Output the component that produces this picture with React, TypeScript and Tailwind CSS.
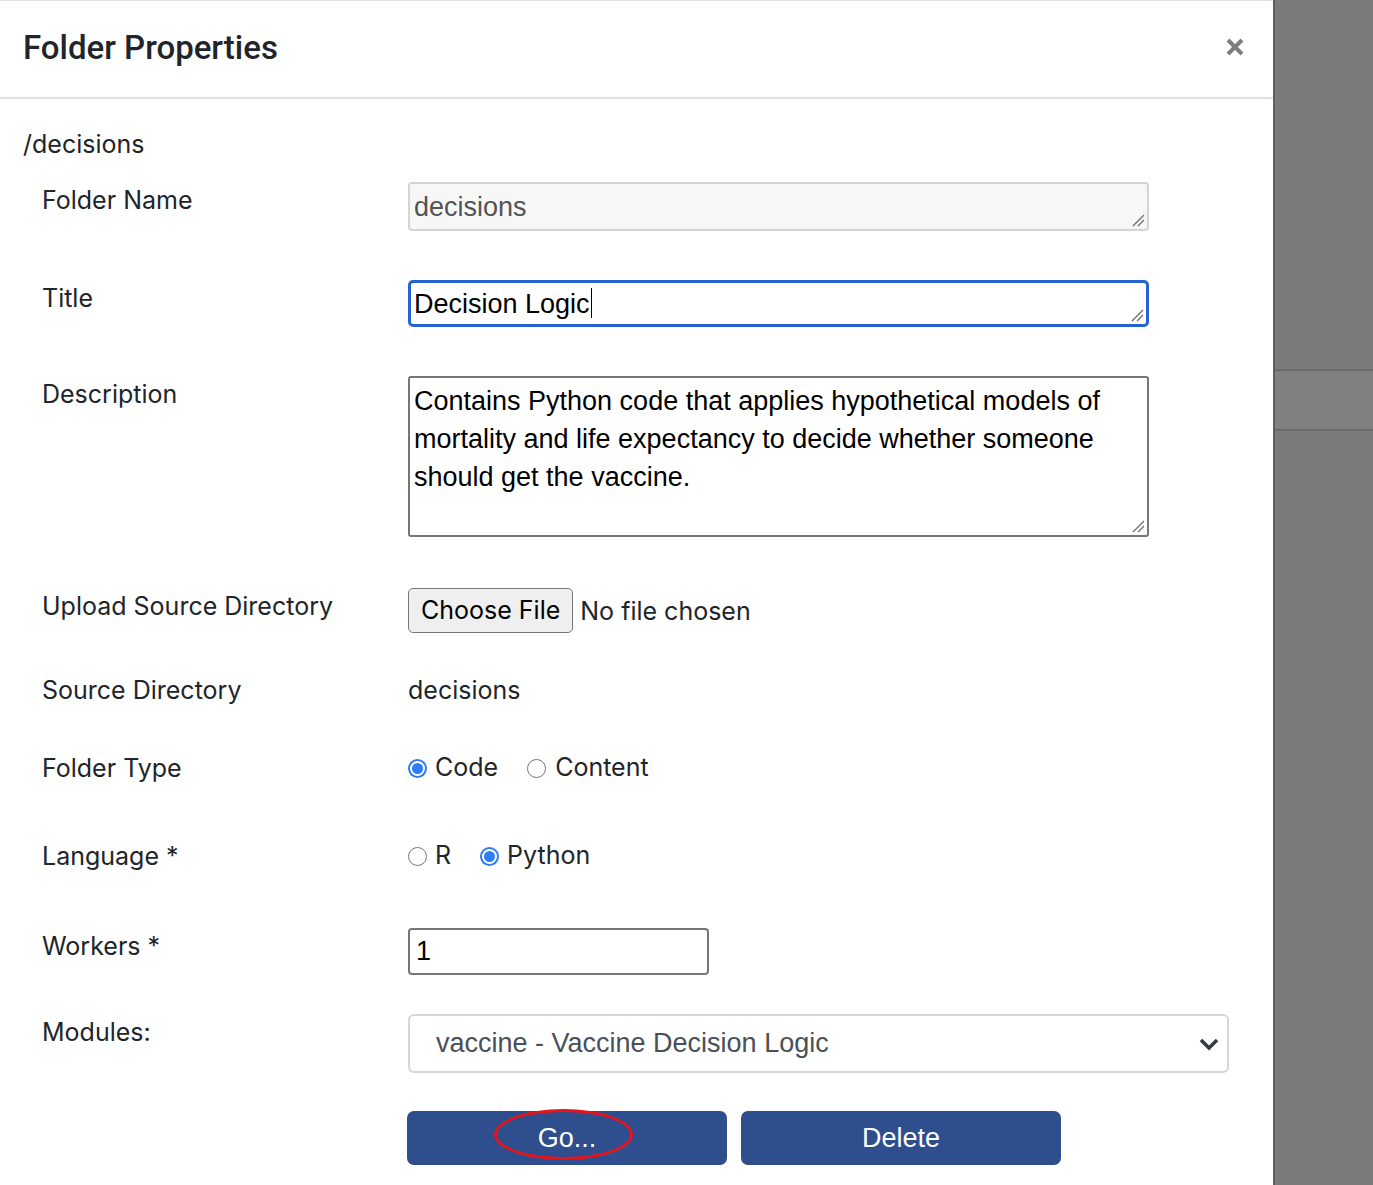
import React from "react";

const sf = "font-['Inter','Noto_Sans',sans-serif]";
const hv = "font-['Liberation_Sans','Arial',sans-serif]";

function Grip() {
  return (
    <svg
      className="absolute right-[2px] bottom-[2px]"
      width="14"
      height="14"
      viewBox="0 0 14 14"
    >
      <path d="M13 2L2 13M13 7L7 13" stroke="#6b6b6b" strokeWidth="1.3" />
    </svg>
  );
}

function Radio({ checked }: { checked?: boolean }) {
  return checked ? (
    <span className="inline-flex w-[19px] h-[19px] rounded-full bg-[#2f7cf6] items-center justify-center shrink-0">
      <span className="w-[15px] h-[15px] rounded-full bg-white flex items-center justify-center">
        <span className="w-[11px] h-[11px] rounded-full bg-[#2f7cf6]" />
      </span>
    </span>
  ) : (
    <span className="inline-block w-[19px] h-[19px] rounded-full border-[1.5px] border-[#767676] bg-white shrink-0" />
  );
}

function Row({
  label,
  h,
  children,
}: {
  label: string;
  h: string;
  children?: React.ReactNode;
}) {
  return (
    <div className={`flex items-start ${h}`}>
      <div className={`w-[385px] pl-[19px] text-[25px] leading-[36px] text-[#212529] ${sf}`}>
        {label}
      </div>
      <div className="flex-1">{children}</div>
    </div>
  );
}

export default function App() {
  return (
    <div className="flex w-[1373px] h-[1185px] overflow-hidden bg-white">
      <div className="w-[1273px] shrink-0 border-t border-[#dee2e6]">
        <div className="h-[98px] flex items-center justify-between pl-[23px] pr-[28px] border-b-2 border-[#dee2e6]">
          <h1 className={`text-[33px] font-medium text-[#212529] mt-[-2px] font-['Roboto','Liberation_Sans',sans-serif]`}>
            Folder Properties
          </h1>
          <svg width="20" height="20" viewBox="0 0 20 20" className="mt-[-4px]">
            <path d="M3 3L17 17M17 3L3 17" stroke="#7d7d7d" strokeWidth="4" />
          </svg>
        </div>

        <div className="pl-[23px] pt-[27px]">
          <div className={`text-[25px] leading-[36px] text-[#212529] mb-[20px] ${sf}`}>
            /decisions
          </div>

          <Row label="Folder Name" h="h-[98px]">
            <div className={`relative w-[741px] h-[49px] rounded-[4px] border-2 border-[#d4d4d4] bg-[#f7f7f7] pl-[4px] pt-[5px] text-[27px] leading-[36px] text-[#545454] ${hv}`}>
              decisions
              <Grip />
            </div>
          </Row>

          <Row label="Title" h="h-[96px]">
            <div className={`relative w-[741px] h-[47px] rounded-[5px] border-[3px] border-[#2563d3] pl-[3px] pt-[3px] text-[27px] leading-[36px] text-black ${hv}`}>
              Decision Logic
              <span className="inline-block w-[1.5px] h-[30px] bg-black align-[-5px] ml-[1px]" />
              <Grip />
            </div>
          </Row>

          <Row label="Description" h="h-[212px]">
            <div className={`relative w-[741px] h-[161px] rounded-[3px] border-2 border-[#767676] pl-[4px] pt-[4px] text-[27px] leading-[38px] text-black ${hv}`}>
              Contains Python code that applies hypothetical models of mortality and life expectancy to decide whether someone should get the vaccine.
              <Grip />
            </div>
          </Row>

          <Row label="Upload Source Directory" h="h-[84px]">
            <div className={`flex items-center gap-[7px] text-[25px] text-[#212529] ${sf}`}>
              <span className="h-[45px] px-[12px] flex items-center rounded-[5px] border-[1.5px] border-[#767676] bg-[#efefef] text-black">
                Choose File
              </span>
              <span className="mt-[2px]">No file chosen</span>
            </div>
          </Row>

          <Row label="Source Directory" h="h-[78px]">
            <div className={`text-[25px] leading-[36px] text-[#212529] ${sf}`}>decisions</div>
          </Row>

          <Row label="Folder Type" h="h-[88px]">
            <div className={`flex items-center h-[36px] text-[25px] text-[#212529] ${sf}`}>
              <Radio checked />
              <span className="ml-[8px]">Code</span>
              <span className="ml-[29px]" />
              <Radio />
              <span className="ml-[9px]">Content</span>
            </div>
          </Row>

          <Row label="Language *" h="h-[90px]">
            <div className={`flex items-center h-[36px] text-[25px] text-[#212529] ${sf}`}>
              <Radio />
              <span className="ml-[8px]">R</span>
              <span className="ml-[29px]" />
              <Radio checked />
              <span className="ml-[8px]">Python</span>
            </div>
          </Row>

          <Row label="Workers *" h="h-[86px]">
            <div className={`w-[301px] h-[47px] rounded-[4px] border-2 border-[#767676] pl-[6px] pt-[3px] text-[27px] leading-[36px] text-black ${hv}`}>
              1
            </div>
          </Row>

          <Row label="Modules:" h="h-[97px]">
            <div className={`flex items-center justify-between w-[821px] h-[59px] rounded-[6px] border-2 border-[#d3d7db] pl-[26px] pr-[7px] text-[27px] text-[#495057] ${hv}`}>
              <span>vaccine - Vaccine Decision Logic</span>
              <svg width="22" height="14" viewBox="0 0 22 14">
                <path d="M3 3l8 8 8-8" fill="none" stroke="#343a40" strokeWidth="3.5" />
              </svg>
            </div>
          </Row>

          <div className="flex gap-[14px] pl-[384px]">
            <button className={`relative w-[320px] h-[54px] rounded-[7px] bg-[#2e4e8e] text-white text-[27px] ${hv}`}>
              Go...
              <span className="absolute left-[87px] top-[-2px] w-[139px] h-[51px] rounded-[50%] border-[3px] border-[#e8141c]" />
            </button>
            <button className={`w-[320px] h-[54px] rounded-[7px] bg-[#2e4e8e] text-white text-[27px] ${hv}`}>
              Delete
            </button>
          </div>
        </div>
      </div>

      <div className="flex-1 bg-[#7b7b7b] border-l-2 border-[#5e5e5e] flex flex-col">
        <div className="h-[369px]" />
        <div className="h-[2px] bg-[#6a6a6a]" />
        <div className="h-[58px] bg-[#808080]" />
        <div className="h-[2px] bg-[#6a6a6a]" />
      </div>
    </div>
  );
}
